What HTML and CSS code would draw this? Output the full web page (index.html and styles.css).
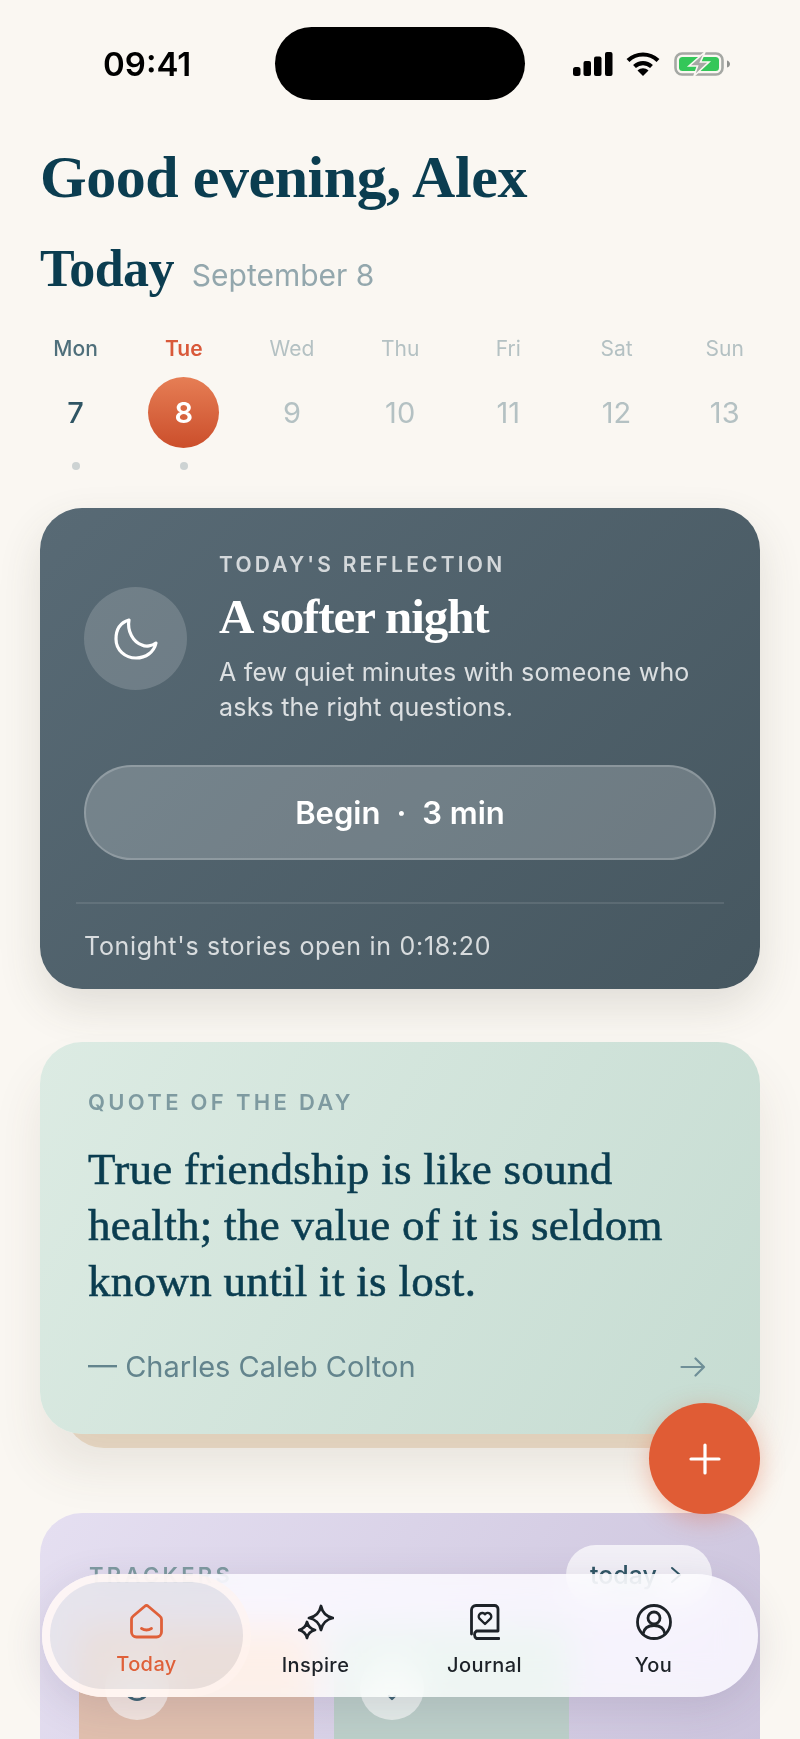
FILE: index.html
```html
<!DOCTYPE html>
<html lang="en">
<head>
    <meta charset="UTF-8">
    <meta name="viewport" content="width=device-width, initial-scale=1.0">
    <title>Today</title>
    <link rel="stylesheet" href="styles.css">
</head>
<body>

    <!-- Status bar -->
    <div class="status-bar">
        <div class="time">09:41</div>
        <div class="island"></div>
        <div class="status-icons">
            <svg class="signal" width="40" height="24" viewBox="0 0 40 24"><rect x="0" y="15" width="7.500" height="9" rx="2.500"/><rect x="10.500" y="9" width="7.500" height="15" rx="2"/><rect x="21" y="4.500" width="7.500" height="19.500" rx="2"/><rect x="32" y="0" width="7.500" height="24" rx="2"/></svg>
            <svg width="34" height="24" viewBox="0 0 34 24"><path d="M2 8.500C10.500 0.500 23.500 0.500 32 8.500" fill="none" stroke="#000" stroke-width="4.200"/><path d="M8.500 14.500C13.500 10 20.500 10 25.500 14.500" fill="none" stroke="#000" stroke-width="4.200"/><path d="M11.500 18.500C15 15.500 19 15.500 22.500 18.500L17 24Z"/></svg>
            <svg width="56" height="24" viewBox="0 0 56 24"><rect x="1.500" y="1.500" width="47" height="21" rx="6.500" fill="none" stroke="#a5a8a4" stroke-width="2.600"/><rect x="5" y="5" width="40" height="14" rx="3.500" fill="#34c759"/><path d="M53 8.500c2 .5 3 2 3 3.500s-1 3-3 3.500Z" fill="#8f918e"/><path d="M31 0L15 14H23.500L20 24L35 10H26.500Z" fill="#a5a8a4" stroke="#faf7f2" stroke-width="1.600"/></svg>
        </div>
    </div>

    <h1 class="greeting">Good evening, Alex</h1>

    <div class="today-row">
        <h2 class="today-title">Today</h2>
        <span class="today-date">September 8</span>
    </div>

    <!-- Week strip -->
    <div class="week">
        <div class="day day-past"><span class="day-name">Mon</span><span class="day-num">7</span><i class="day-dot"></i></div>
        <div class="day day-current"><span class="day-name">Tue</span><span class="day-num">8</span><i class="day-dot"></i></div>
        <div class="day"><span class="day-name">Wed</span><span class="day-num">9</span></div>
        <div class="day"><span class="day-name">Thu</span><span class="day-num">10</span></div>
        <div class="day"><span class="day-name">Fri</span><span class="day-num">11</span></div>
        <div class="day"><span class="day-name">Sat</span><span class="day-num">12</span></div>
        <div class="day"><span class="day-name">Sun</span><span class="day-num">13</span></div>
    </div>

    <!-- Reflection card -->
    <section class="card reflection">
        <div class="reflection-top">
            <div class="moon">
                <svg width="44" height="42" viewBox="0 0 44 42" fill="none" stroke="#fff" stroke-width="3.200" stroke-linejoin="round"><path d="M15 2C5 5 2 13 2 21C2 32 11 40 22 40C32 40 40 34 42 25C38 28 32 29 28 27C19 24 13 13 15 2Z"/></svg>
            </div>
            <div class="reflection-text">
                <div class="reflection-label">TODAY'S REFLECTION</div>
                <div class="reflection-title">A softer night</div>
                <p class="reflection-desc">A few quiet minutes with someone who asks the right questions.</p>
            </div>
        </div>
        <button class="begin">Begin<span class="begin-dot">·</span>3 min</button>
        <div class="reflection-foot">Tonight's stories open in 0:18:20</div>
    </section>

    <!-- Quote card -->
    <section class="card quote">
        <div class="quote-label">QUOTE OF THE DAY</div>
        <p class="quote-text">True friendship is like sound health; the value of it is seldom known until it is lost.</p>
        <div class="quote-foot">
            <span>— Charles Caleb Colton</span>
            <svg width="26" height="20" viewBox="0 0 26 20" fill="none" stroke="#6f8f97" stroke-width="2.200" stroke-linecap="round" stroke-linejoin="round"><path d="M1.500 10H24M15.500 1.500L24 10L15.500 18.500"/></svg>
        </div>
    </section>

    <!-- Trackers card, runs off the bottom of the screen -->
    <section class="card trackers">
        <div class="trackers-head">
            <span class="trackers-label">TRACKERS</span>
            <span class="trackers-pill">today
                <svg width="12" height="18" viewBox="0 0 12 18" fill="none" stroke="#2f5564" stroke-width="2" stroke-linecap="round" stroke-linejoin="round"><path d="M2 2L10 9L2 16"/></svg>
            </span>
        </div>
        <div class="tiles">
            <div class="tile tile-peach">
                <div class="tile-circle">
                    <svg width="26" height="26" viewBox="0 0 26 26" fill="none" stroke="#3f6473" stroke-width="2.800" stroke-linecap="round"><path d="M5 21.500A12 12 0 0 0 21 21.500"/></svg>
                </div>
            </div>
            <div class="tile tile-green">
                <div class="tile-circle">
                    <svg width="26" height="26" viewBox="0 0 26 26" fill="none" stroke="#3f6473" stroke-width="2.400" stroke-linecap="round" stroke-linejoin="round"><path d="M10 21L13 24L16 21"/></svg>
                </div>
            </div>
        </div>
    </section>

    <button class="fab">
        <svg width="32" height="32" viewBox="0 0 32 32" stroke="#fff" stroke-width="3.200" stroke-linecap="round"><path d="M16 2V30M2 16H30"/></svg>
    </button>

    <!-- Tab bar -->
    <nav class="tabbar">
        <div class="tab tab-active">
            <svg width="33" height="35" viewBox="0 0 33 35" fill="none" stroke="#df6039" stroke-width="2.800" stroke-linecap="round" stroke-linejoin="round"><path d="M14.800 2.300a2.500 2.500 0 0 1 3.400 0L30 12.300a3.500 3.500 0 0 1 1.500 2.900V28a5 5 0 0 1-5 5H6.500a5 5 0 0 1-5-5V15.200a3.500 3.500 0 0 1 1.500-2.900Z"/><path d="M11.500 24.500q5 3 10 0"/></svg>
            <span>Today</span>
        </div>
        <div class="tab">
            <svg width="36" height="36" viewBox="0 0 36 36" fill="none" stroke="#1d2228" stroke-width="2.800" stroke-linejoin="round"><path d="M23 2Q25 12 35 14Q25 16 23 26Q21 16 11 14Q21 12 23 2Z"/><path d="M9 18Q10.500 24.500 17 26Q10.500 27.500 9 34Q7.500 27.500 1 26Q7.500 24.500 9 18Z"/></svg>
            <span>Inspire</span>
        </div>
        <div class="tab">
            <svg width="30" height="36" viewBox="0 0 30 36" fill="none" stroke="#1d2228" stroke-width="2.800" stroke-linecap="round" stroke-linejoin="round"><path d="M6 1.500H24.500A3.500 3.500 0 0 1 28 5V27H6.500A4.500 4.500 0 0 0 6.500 34.500H29M6 1.500A4.500 4.500 0 0 0 1.500 6V30"/><path d="M15 20L9.500 14.700A3.500 3.500 0 0 1 15 10.300A3.500 3.500 0 0 1 20.500 14.700Z" stroke-width="2.400"/></svg>
            <span>Journal</span>
        </div>
        <div class="tab">
            <svg width="36" height="36" viewBox="0 0 36 36" fill="none" stroke="#1d2228" stroke-width="2.800" stroke-linecap="round"><circle cx="18" cy="18" r="16.500"/><circle cx="18" cy="14" r="6"/><path d="M7 30C8 24 12.500 21.500 18 21.500S28 24 29 30"/></svg>
            <span>You</span>
        </div>
    </nav>

</body>
</html>
```

FILE: styles.css
```css
/* General page */
* {
    box-sizing: border-box;
}

body {
    margin: 0;
    width: 800px;
    height: 1739px;
    overflow: hidden;
    position: relative;
    background-color: #faf7f2;
    font-family: 'Inter', sans-serif;
    color: #0b3d50;
}

/* Status bar */
.status-bar {
    display: flex;
    align-items: center;
    height: 73px;
    margin-top: 27px;
    padding: 0 70px 0 103px;
}

.time {
    width: 172px;
    font-size: 33px;
    font-weight: 600;
    color: #000;
}

.island {
    width: 250px;
    height: 73px;
    border-radius: 37px;
    background-color: #000;
}

.status-icons {
    display: flex;
    align-items: center;
    gap: 14px;
    margin-left: auto;
}

.signal {
    margin-right: -1px;
}

/* Headings */
.greeting {
    margin: 0;
    padding: 46px 0 0 40px;
    font-family: 'Liberation Serif', serif;
    font-size: 60px;
    line-height: 62px;
    font-weight: 700;
    letter-spacing: -0.450px;
}

.today-row {
    display: flex;
    align-items: baseline;
    gap: 18px;
    padding: 32px 0 0 40px;
}

.today-title {
    margin: 0;
    font-family: 'Liberation Serif', serif;
    font-size: 52px;
    line-height: 58px;
    font-weight: 700;
    letter-spacing: -0.600px;
}

.today-date {
    font-size: 30px;
    color: #93a7ad;
}

/* Week strip */
.week {
    display: grid;
    grid-template-columns: repeat(7, 108.2px);
    padding: 38px 0 0 21.500px;
}

.day {
    display: flex;
    flex-direction: column;
    align-items: center;
    color: #b4c1c3;
}

.day-name {
    font-size: 21px;
    line-height: 26px;
}

.day-num {
    width: 71px;
    height: 71px;
    margin-top: 15px;
    border-radius: 50%;
    display: flex;
    align-items: center;
    justify-content: center;
    font-size: 29px;
}

.day-dot {
    width: 8px;
    height: 8px;
    margin-top: 14px;
    border-radius: 50%;
    background-color: #cdd3d3;
}

.day-past .day-name {
    color: #4f6f7b;
    font-weight: 500;
}

.day-past .day-num {
    color: #2f5564;
    font-weight: 500;
}

.day-current .day-name {
    color: #d9593a;
    font-weight: 600;
}

.day-current .day-num {
    color: #fff;
    font-weight: 600;
    background: linear-gradient(180deg, #e67e55, #cb4e2b);
}

/* Cards */
.card {
    margin: 0 40px;
    border-radius: 42px;
}

.reflection {
    margin-top: 38px;
    padding: 44px 44px 27px;
    color: #fff;
    background: linear-gradient(135deg, #586a75, #465760);
    box-shadow: 0 18px 44px rgba(70, 70, 55, 0.14);
}

.reflection-top {
    display: flex;
    align-items: center;
    gap: 32px;
}

.moon {
    flex: none;
    width: 103px;
    height: 103px;
    border-radius: 50%;
    display: flex;
    align-items: center;
    justify-content: center;
    background-color: rgba(255, 255, 255, 0.16);
}

.reflection-label {
    font-size: 21px;
    line-height: 26px;
    font-weight: 600;
    letter-spacing: 3.200px;
    color: rgba(255, 255, 255, 0.75);
}

.reflection-title {
    margin-top: 9px;
    font-family: 'Liberation Serif', serif;
    font-size: 49px;
    line-height: 60px;
    font-weight: 700;
    letter-spacing: -1.100px;
}

.reflection-desc {
    margin: 8px 0 0;
    font-size: 25px;
    line-height: 35px;
    letter-spacing: 0.200px;
    color: rgba(255, 255, 255, 0.8);
}

.begin {
    display: block;
    width: 632px;
    height: 95px;
    margin-top: 40px;
    border-radius: 48px;
    border: 2px solid rgba(255, 255, 255, 0.2);
    background-color: rgba(255, 255, 255, 0.2);
    color: #fff;
    font-family: 'Inter', sans-serif;
    font-size: 31px;
    font-weight: 600;
}

.begin-dot {
    margin: 0 16px;
}

.reflection-foot {
    margin: 42px -8px 0;
    padding: 26px 8px 0;
    border-top: 2px solid rgba(255, 255, 255, 0.1);
    font-size: 25px;
    line-height: 32px;
    letter-spacing: 0.700px;
    color: rgba(255, 255, 255, 0.78);
}

/* Quote card */
.quote {
    position: relative;
    margin-top: 53px;
    padding: 47px 54px 49px 48px;
    background: linear-gradient(120deg, #dcebe3, #c6dcd2);
    box-shadow: 0 34px 50px rgba(80, 70, 50, 0.1);
}

.quote::before {
    content: "";
    position: absolute;
    z-index: -1;
    left: 24px;
    right: 24px;
    bottom: -14px;
    height: 80px;
    border-radius: 42px;
    background-color: #efdfca;
}

.quote-label {
    font-size: 22px;
    line-height: 26px;
    font-weight: 600;
    letter-spacing: 3.300px;
    color: #7e9aa0;
}

.quote-text {
    margin: 26px 20px 0 0;
    font-family: 'Liberation Serif', serif;
    font-size: 45px;
    line-height: 56px;
    letter-spacing: 0.300px;
    -webkit-text-stroke: 0.6px #0b3d50;
}

.quote-foot {
    display: flex;
    align-items: center;
    justify-content: space-between;
    margin-top: 40px;
    font-size: 29px;
    line-height: 36px;
    color: #63848d;
}

/* Trackers card */
.trackers {
    margin-top: 79px;
    height: 300px;
    padding: 32px 48px 0 39px;
    background: linear-gradient(120deg, #e5dff1, #cbc3dc);
}

.trackers-head {
    display: flex;
    align-items: center;
    justify-content: space-between;
    padding-left: 10px;
}

.trackers-label {
    font-size: 22px;
    font-weight: 600;
    letter-spacing: 3.300px;
    color: #7e9aa0;
}

.trackers-pill {
    display: flex;
    align-items: center;
    gap: 13px;
    height: 60px;
    padding: 0 30px 0 24px;
    border-radius: 30px;
    background-color: rgba(255, 255, 255, 0.7);
    font-size: 25px;
    font-weight: 500;
    color: #2f5564;
}

.tiles {
    display: flex;
    gap: 20px;
    margin-top: 23px;
}

.tile {
    width: 235px;
    height: 180px;
    padding: 28px 26px;
    border-radius: 4px;
}

.tile-peach {
    background-color: #e0bfae;
}

.tile-green {
    background-color: #bccfc9;
}

.tile-circle {
    width: 64px;
    height: 64px;
    border-radius: 50%;
    display: flex;
    align-items: center;
    justify-content: center;
    background-color: rgba(255, 255, 255, 0.6);
}

/* Floating add button */
.fab {
    position: absolute;
    top: 1403px;
    left: 649px;
    width: 111px;
    height: 111px;
    border: none;
    border-radius: 50%;
    display: flex;
    align-items: center;
    justify-content: center;
    background-color: #e05c35;
    box-shadow: 0 6px 24px rgba(224, 92, 53, 0.35);
}

/* Tab bar */
.tabbar {
    position: absolute;
    top: 1574px;
    left: 42px;
    width: 716px;
    height: 123px;
    display: grid;
    grid-template-columns: repeat(4, 169px);
    justify-content: center;
    align-items: center;
    border-radius: 62px;
    background-color: rgba(255, 255, 255, 0.78);
    -webkit-backdrop-filter: blur(18px) saturate(190%);
    backdrop-filter: blur(18px) saturate(190%);
    box-shadow: 0 10px 40px rgba(70, 60, 90, 0.14);
}

.tab {
    height: 107px;
    display: flex;
    flex-direction: column;
    align-items: center;
    gap: 13px;
    padding-top: 22px;
    font-size: 20px;
    line-height: 24px;
    font-weight: 500;
    letter-spacing: 0.400px;
    color: #1d2228;
}

.tab-active {
    margin: 0 -12px;
    border-radius: 54px;
    background-color: rgba(90, 90, 110, 0.12);
    color: #df6039;
    box-shadow: 0 0 0 8px rgba(255, 244, 238, 0.6);
}
```
